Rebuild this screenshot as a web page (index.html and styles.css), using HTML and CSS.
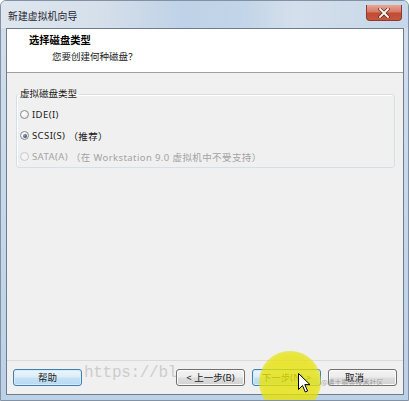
FILE: index.html
```html
<!DOCTYPE html>
<html lang="zh-CN">
<head>
<meta charset="utf-8">
<title>新建虚拟机向导</title>
<link rel="stylesheet" href="styles.css">
</head>
<body>
<div class="window">
  <div class="titlebar">
    <span class="title">新建虚拟机向导</span>
    <div class="close">
      <svg width="12" height="10" viewBox="0 0 12 10"><path d="M2 1 L10 9 M10 1 L2 9" stroke="#5a2a20" stroke-width="3.2" stroke-linecap="square"/><path d="M2 1 L10 9 M10 1 L2 9" stroke="#ffffff" stroke-width="1.8" stroke-linecap="square"/></svg>
    </div>
  </div>
  <div class="client">
    <div class="header">
      <div class="h-title">选择磁盘类型</div>
      <div class="h-sub">您要创建何种磁盘？</div>
    </div>
    <div class="content">
      <fieldset class="group">
        <legend>虚拟磁盘类型</legend>
        <div class="row"><span class="radio"></span><span>IDE(I)</span></div>
        <div class="row"><span class="radio checked"></span><span>SCSI(S)</span><span class="note">（推荐）</span></div>
        <div class="row disabled"><span class="radio"></span><span>SATA(A)</span><span class="note">（在 Workstation 9.0 虚拟机中不受支持）</span></div>
      </fieldset>
    </div>
    <div class="footer">
      <span class="watermark">https://bl</span>
      <button class="btn blue">帮助</button>
      <div class="spacer"></div>
      <button class="btn">&lt; 上一步(B)</button>
      <button class="btn blue">下一步(N) &gt;</button>
      <button class="btn cancel">取消</button>
    </div>
  </div>
  <span class="wm2">@稀土掘金技术社区</span>
  <div class="highlight"></div>
  <svg class="cursor" width="13" height="21" viewBox="0 0 13 21"><path d="M0.5 0.5 L0.5 16.5 L4.5 12.5 L7.3 19 L9.6 18 L6.8 11.6 L12 11.6 Z" fill="#ffffff" stroke="#000000" stroke-width="1"/></svg>
</div>
</body>
</html>
```

FILE: styles.css
```css
* { box-sizing: border-box; }
html, body { margin: 0; padding: 0; }
body {
  width: 409px;
  height: 401px;
  overflow: hidden;
  background: #ffffff;
  font-family: "Noto Sans", "Noto Sans CJK SC", sans-serif;
  font-size: 9.5px;
  color: #000000;
}
.window {
  position: relative;
  width: 409px;
  height: 401px;
  display: flex;
  flex-direction: column;
  padding: 0 4px 5px 5px;
  border: 1px solid #8291a3;
  border-radius: 6px 6px 0 0;
  background: linear-gradient(to bottom, #d3deea, #c8d8ea 50%, #bcd0e6);
  overflow: hidden;
}
.titlebar {
  position: relative;
  height: 27px;
  flex: none;
  display: flex;
  align-items: center;
  margin: 0 -4px 0 -5px;
  padding-left: 7px;
  background: linear-gradient(to right, #dfe6ee 0%, #d5dfea 25%, #bfd2e7 45%, #c3d5e8 60%, #d4dfeb 72%, #c6d7e9 100%);
}
.title {
  font-size: 9.8px;
  color: #1c2530;
  letter-spacing: 0.1px;
  margin-top: 2px;
}
.close {
  position: absolute;
  right: 6px;
  top: 4px;
  width: 36px;
  height: 16px;
  border: 1px solid #8a3a30;
  border-top: none;
  border-radius: 0 0 4px 4px;
  background: linear-gradient(to bottom, #e8a595 0%, #d97a66 45%, #c24b34 55%, #c9553c 100%);
  display: flex;
  align-items: center;
  justify-content: center;
}
.client {
  flex: 1;
  display: flex;
  flex-direction: column;
  border: 1px solid #6d7d8f;
  background: #f0f0f0;
}
.header {
  height: 44px;
  flex: none;
  background: #ffffff;
  border-bottom: 1px solid #a0a0a0;
  padding-top: 5px;
}
.h-title {
  font-weight: bold;
  font-size: 10.3px;
  line-height: 13px;
  padding-left: 22px;
}
.h-sub {
  font-size: 9.5px;
  line-height: 13px;
  margin-top: 3px;
  padding-left: 45px;
  color: #1a1a1a;
}
.content {
  flex: 1;
  padding: 15px 8px 0 9px;
}
.group {
  margin: 0;
  padding: 4px 1px 0 1px;
  border: 1px solid #d5dfe5;
  border-radius: 3px;
  box-shadow: inset 1px 1px 0 #ffffff;
}
.group legend {
  padding: 0 2px;
  font-size: 9.5px;
  line-height: 12px;
  color: #1a1a1a;
}
.row {
  height: 21px;
  display: flex;
  align-items: center;
  padding-left: 2px;
  color: #1a1a1a;
  letter-spacing: 0.4px;
}
.row.disabled { color: #a3a3a3; }
.radio {
  width: 9px;
  height: 9px;
  border-radius: 50%;
  border: 1px solid #8d8d8d;
  background: radial-gradient(circle at 40% 40%, #ffffff 0%, #f3f3f3 45%, #d6d6d6 100%);
  margin-right: 3px;
  position: relative;
  flex: none;
}
.radio.checked::after {
  content: "";
  position: absolute;
  left: 1.5px;
  top: 1.5px;
  width: 4px;
  height: 4px;
  border-radius: 50%;
  background: radial-gradient(circle at 35% 35%, #8aa6c0 0%, #37526b 70%, #1f3548 100%);
}
.row.disabled .radio {
  border-color: #c8c8c8;
  background: #f4f4f4;
}
.note { margin-left: 3px; }
.footer {
  position: relative;
  height: 34px;
  flex: none;
  display: flex;
  align-items: flex-start;
  gap: 7px;
  padding: 8px 6px 0 6px;
  border-top: 1px solid #dadada;
}
.spacer { flex: 1; }
.btn {
  position: relative;
  width: 69px;
  height: 17px;
  padding: 0;
  border: 1px solid #707070;
  border-radius: 3px;
  background: linear-gradient(to bottom, #f3f3f3 0%, #ececec 48%, #dedede 52%, #d2d2d2 100%);
  font-family: "Noto Sans", "Noto Sans CJK SC", sans-serif;
  font-size: 9.5px;
  line-height: 15px;
  color: #1a1a1a;
  box-shadow: inset 0 0 0 1px #fbfbfb;
}
.btn.blue {
  border-color: #3c7fb1;
  background: linear-gradient(to bottom, #eaf5fc 0%, #dcedf8 48%, #c6e2f5 52%, #b6d9f0 100%);
  box-shadow: inset 0 0 0 1px #d4ecfb;
}
.btn.cancel {
  text-align: left;
  padding-left: 16px;
}
.watermark {
  position: absolute;
  left: 77px;
  top: 1px;
  font-family: "Liberation Mono", monospace;
  font-size: 16px;
  line-height: 22px;
  color: #cdcdcd;
  letter-spacing: -0.3px;
}
.wm2 {
  position: absolute;
  left: 320px;
  top: 377px;
  font-family: "Noto Sans CJK SC", sans-serif;
  font-size: 7px;
  line-height: 9px;
  color: rgba(130, 130, 130, 0.7);
}
.highlight {
  position: absolute;
  left: 258px;
  top: 350px;
  width: 62px;
  height: 62px;
  border-radius: 50%;
  background: radial-gradient(circle, rgba(230, 226, 10, 0.82) 0%, rgba(230, 226, 10, 0.8) 60%, rgba(230, 226, 10, 0.5) 85%, rgba(230, 226, 10, 0) 100%);
}
.cursor {
  position: absolute;
  left: 297px;
  top: 372px;
}
```
